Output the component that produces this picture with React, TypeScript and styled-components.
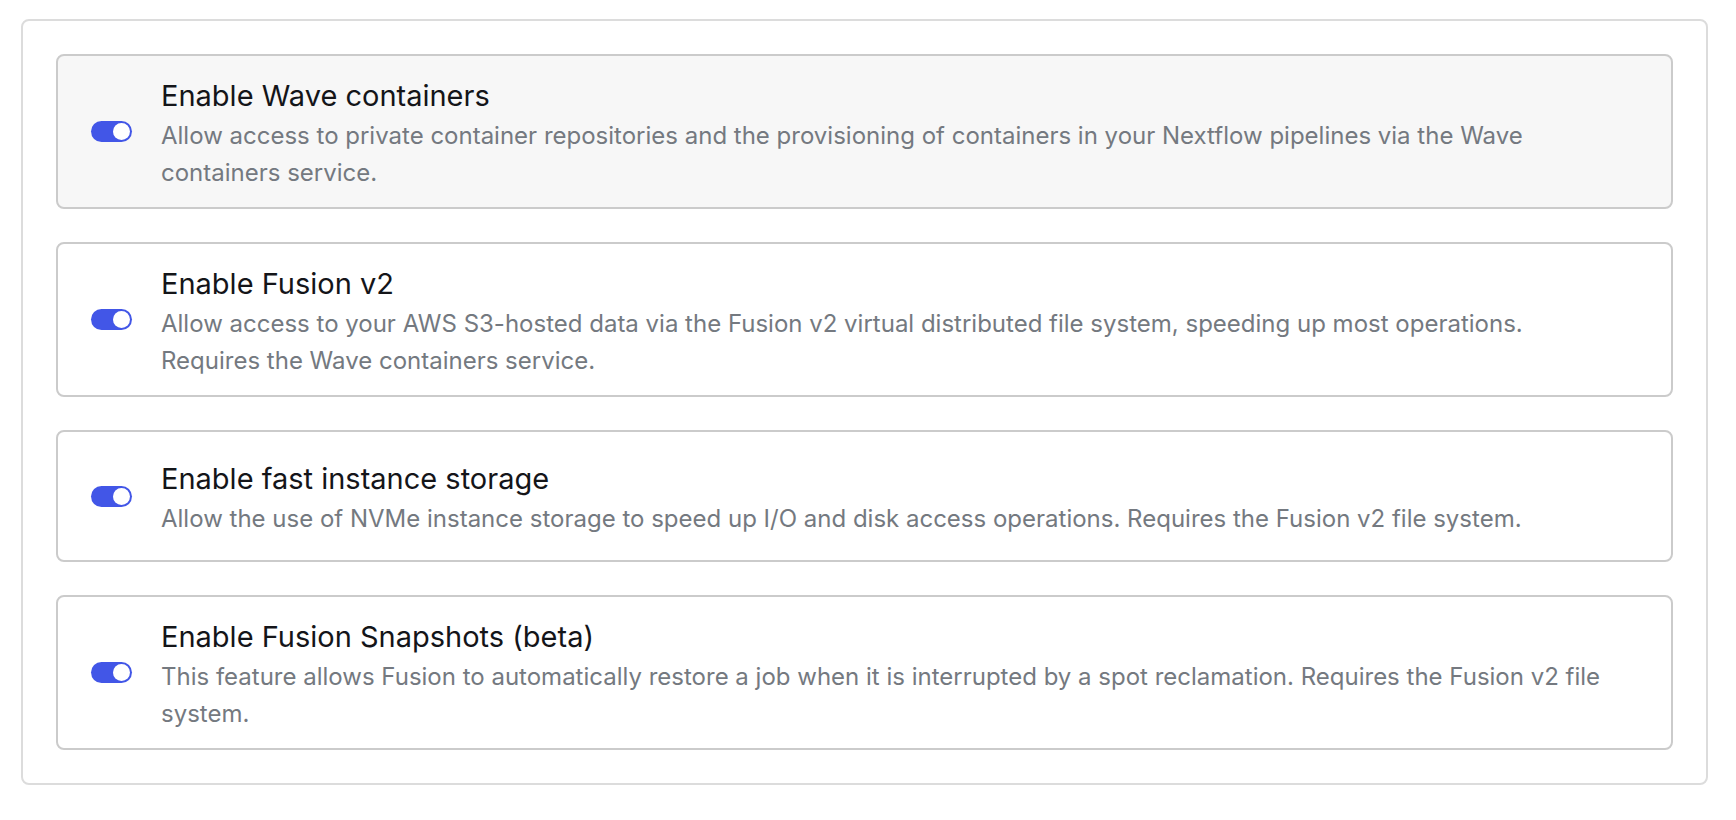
import React from "react";
import styled, { createGlobalStyle } from "styled-components";

const GlobalStyle = createGlobalStyle`
  * { box-sizing: border-box; }
  body {
    margin: 0;
    background: #fff;
    font-family: Inter, "Liberation Sans", sans-serif;
  }
`;

const Page = styled.main`
  padding: 19px 28px 35px 21px;
`;

const Panel = styled.section`
  display: flex;
  flex-direction: column;
  gap: 33px;
  padding: 33px;
  border: 2px solid #dcdcdc;
  border-radius: 8px;
`;

const Card = styled.label<{ $active?: boolean }>`
  display: flex;
  align-items: center;
  min-height: 132px;
  padding: 16px 56px 16px 33px;
  gap: 29px;
  border: 2px solid #cbcbcb;
  border-radius: 8px;
  background: ${(p) => (p.$active ? "#f7f7f7" : "#fff")};
  cursor: pointer;
`;

const Switch = styled.input`
  appearance: none;
  flex: none;
  width: 41px;
  height: 21px;
  margin: 0;
  padding: 2px;
  border-radius: 11px;
  background: #b5b7bd;
  display: flex;
  cursor: pointer;
  &::before {
    content: "";
    width: 17px;
    height: 17px;
    border-radius: 50%;
    background: #fff;
  }
  &:checked {
    background: #4256e7;
    justify-content: flex-end;
  }
`;

const Copy = styled.span`
  display: flex;
  flex-direction: column;
  padding-top: 2px;
`;

const Title = styled.span`
  font-size: 29px;
  line-height: 43px;
  color: #141519;
`;

const Description = styled.span`
  font-size: 24px;
  line-height: 37px;
  color: #747980;
`;

const options = [
  { title: "Enable Wave containers", text: "Allow access to private container repositories and the provisioning of containers in your Nextflow pipelines via the Wave containers service.", active: true },
  { title: "Enable Fusion v2", text: "Allow access to your AWS S3-hosted data via the Fusion v2 virtual distributed file system, speeding up most operations. Requires the Wave containers service." },
  { title: "Enable fast instance storage", text: "Allow the use of NVMe instance storage to speed up I/O and disk access operations. Requires the Fusion v2 file system." },
  { title: "Enable Fusion Snapshots (beta)", text: "This feature allows Fusion to automatically restore a job when it is interrupted by a spot reclamation. Requires the Fusion v2 file system." },
];

export default function App() {
  return (
    <>
      <GlobalStyle />
      <Page>
        <Panel>
          {options.map((o) => (
            <Card key={o.title} $active={o.active}>
              <Switch type="checkbox" role="switch" defaultChecked />
              <Copy>
                <Title>{o.title}</Title>
                <Description>{o.text}</Description>
              </Copy>
            </Card>
          ))}
        </Panel>
      </Page>
    </>
  );
}
